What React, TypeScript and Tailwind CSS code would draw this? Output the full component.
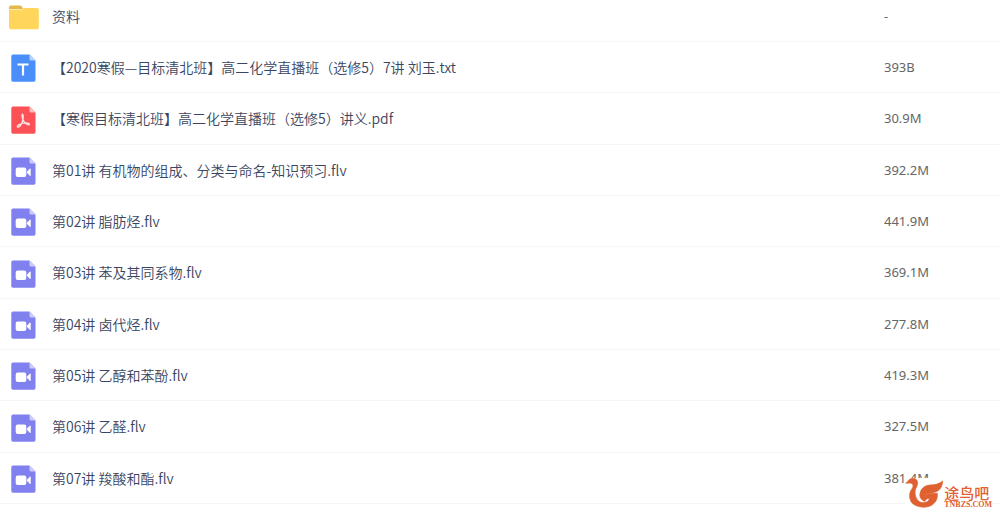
import { clsx } from 'clsx'

type FileKind = 'folder' | 'txt' | 'pdf' | 'video'

interface FileItem {
  name: string
  size: string
  kind: FileKind
}

const files: FileItem[] = [
  { name: '资料', size: '-', kind: 'folder' },
  { name: '【2020寒假—目标清北班】高二化学直播班（选修5）7讲 刘玉.txt', size: '393B', kind: 'txt' },
  { name: '【寒假目标清北班】高二化学直播班（选修5）讲义.pdf', size: '30.9M', kind: 'pdf' },
  { name: '第01讲 有机物的组成、分类与命名-知识预习.flv', size: '392.2M', kind: 'video' },
  { name: '第02讲 脂肪烃.flv', size: '441.9M', kind: 'video' },
  { name: '第03讲 苯及其同系物.flv', size: '369.1M', kind: 'video' },
  { name: '第04讲 卤代烃.flv', size: '277.8M', kind: 'video' },
  { name: '第05讲 乙醇和苯酚.flv', size: '419.3M', kind: 'video' },
  { name: '第06讲 乙醛.flv', size: '327.5M', kind: 'video' },
  { name: '第07讲 羧酸和酯.flv', size: '381.4M', kind: 'video' },
]

function FolderIcon() {
  return (
    <svg width="30" height="25" viewBox="0 0 30 25" aria-hidden="true">
      <path d="M0 2.500A2 2 0 0 1 2 .5h9a2 2 0 0 1 1.600.8L14.400 4H0z" fill="#e3b94c" />
      <path d="M0 4.500h13.500l1.600-1.400H28a1.800 1.800 0 0 1 1.800 1.800v17.600A1.800 1.800 0 0 1 28 24.300H2A2 2 0 0 1 0 22.500z" fill="#ffd55b" />
    </svg>
  )
}

const pageColors = {
  txt: { body: '#4a8ff9', fold: '#b7d3fd' },
  pdf: { body: '#fc5156', fold: '#feb9bb' },
  video: { body: '#8080ef', fold: '#cccbfa' },
}

function PageIcon({ kind }: { kind: 'txt' | 'pdf' | 'video' }) {
  const { body, fold } = pageColors[kind]
  return (
    <svg width="26" height="28" viewBox="0 0 26 28" aria-hidden="true">
      <path d="M2 .5h16.500l6 6V26a1.700 1.700 0 0 1-1.700 1.700H2A1.700 1.700 0 0 1 .3 26V2.200A1.700 1.700 0 0 1 2 .5z" fill={body} />
      <path d="M18.500.5l6 6h-4.500A1.500 1.500 0 0 1 18.500 5z" fill={fold} />
      {kind === 'txt' && <path d="M6.500 10.500h11M12 10.500v11" stroke="#fff" strokeWidth="2.200" fill="none" />}
      {kind === 'pdf' && (
        <path
          d="M11.300 8.200c1.300 0 .9 3.200.6 5.400M11.900 13.600c-.7 3-2.400 6.800-4.400 7.500-1.400.4-1.600-1-.2-1.900 2.500-1.600 7.300-2.800 10.200-1.900 1.500.5.600 1.800-.7 1.300-2.200-.8-4.200-2.700-4.900-5-.6-2-1-5.100-.6-5.400"
          stroke="#ffe3e3"
          strokeWidth="1.400"
          strokeLinecap="round"
          fill="none"
        />
      )}
      {kind === 'video' && (
        <>
          <rect x="4.700" y="10.500" width="10.600" height="9.500" rx="2" fill="#fff" />
          <path d="M15.900 14.800l2.900-3c.5-.5.900-.2.900.4v6.200c0 .6-.4.800-.9.400l-2.900-3z" fill="#fff" />
        </>
      )}
    </svg>
  )
}

function Watermark() {
  return (
    <div className="absolute right-2 bottom-1 flex items-end bg-white text-[#df6030]">
      <svg width="39" height="31" viewBox="7 15 117 93" aria-hidden="true">
        <path
          d="M9 30C18 27 17 17 30 16C43 16 48 27 43 39C38 49 35 56 39 70C43 83 52 90 64 89C74 88 80 83 80 76C73 77 69 80 67 85C56 82 50 73 52 61C55 46 66 37 82 36C98 35 110 33 120 24C119 40 113 51 101 56C88 61 73 59 64 69C72 63 84 61 104 61C106 78 98 92 84 98C66 106 41 103 28 90C18 76 19 60 27 49C32 41 33 36 28 32C23 28 17 32 9 30z"
          fill="currentColor"
          stroke="currentColor"
          strokeWidth="2"
          strokeLinejoin="round"
        />
      </svg>
      <div className="flex flex-col">
        <span className="font-['Liberation_Serif','Noto_Sans_CJK_SC',serif] text-[15px] leading-[14px] font-medium">途鸟吧</span>
        <span className="font-['Liberation_Serif',serif] text-[8px] leading-[8px] font-bold">TNBZS.COM</span>
      </div>
    </div>
  )
}

export default function App() {
  return (
    <div className="relative min-h-screen overflow-hidden bg-white font-['Noto_Sans','Noto_Sans_CJK_SC',sans-serif]">
      <table className="w-full table-fixed border-separate border-spacing-0">
        <colgroup>
          <col className="w-12" />
          <col />
          <col className="w-[120px]" />
        </colgroup>
        <tbody>
          {files.map((file, index) => {
            const cell = clsx('border-b border-[#f5f6f8] align-middle', index === 0 && 'pb-2')
            return (
              <tr key={file.name} className="h-[51px] first:h-[42px] nth-[3n]:h-[52px]">
                <td className={cell}>
                  <div className="flex justify-center pt-0.5">
                    {file.kind === 'folder' ? <FolderIcon /> : <PageIcon kind={file.kind} />}
                  </div>
                </td>
                <td className={clsx(cell, 'pl-1')}>
                  <a href="#" className="block truncate pb-px font-['Noto_Sans_CJK_SC',sans-serif] text-sm font-[350] text-[#3a465f]">
                    {file.name}
                  </a>
                </td>
                <td className={clsx(cell, 'pt-px pl-1 text-[13px] text-[#666]')}>{file.size}</td>
              </tr>
            )
          })}
        </tbody>
      </table>
      <Watermark />
    </div>
  )
}
